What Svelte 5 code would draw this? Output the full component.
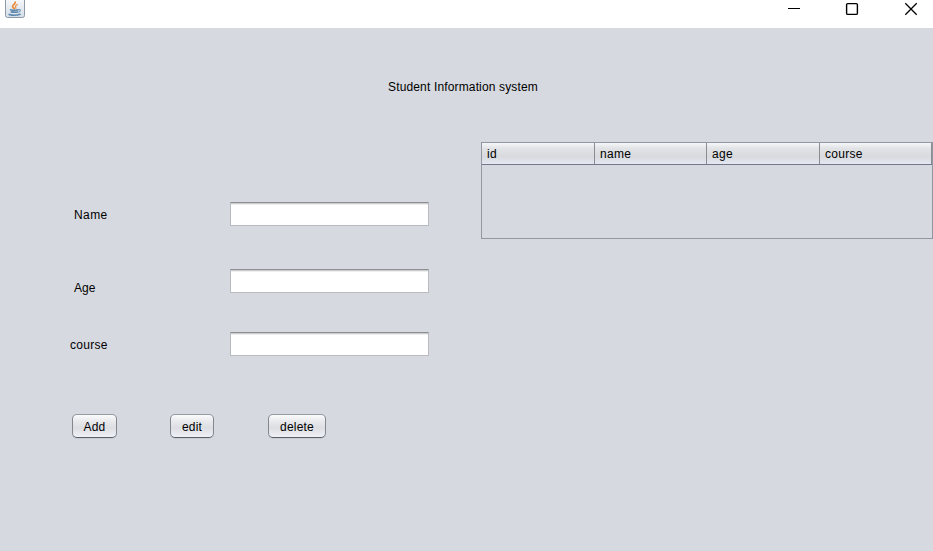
<script>
  let fields = $state([
    { label: 'Name', value: '' },
    { label: 'Age', value: '' },
    { label: 'course', value: '' },
  ]);
  const columns = ['id', 'name', 'age', 'course'];
  const actions = ['Add', 'edit', 'delete'];
</script>

<div class="window">
  <header class="titlebar">
    <svg class="java" width="20" height="18" viewBox="0 0 20 18">
      <defs>
        <linearGradient id="tile" x1="0" y1="0" x2="0" y2="1">
          <stop offset="0" stop-color="#f7f9fb" />
          <stop offset="1" stop-color="#d3dde7" />
        </linearGradient>
      </defs>
      <path d="M.5-1V15.5Q.5 17.5 2.5 17.5H17.5Q19.5 17.5 19.5 15.5V-1Z" fill="url(#tile)" stroke="#8d99a6" />
      <g fill="none" stroke-linecap="round">
        <path d="M10.2 2.2C11 4 6.8 4.8 7.7 6.8Q8.2 7.8 9.3 8.6" stroke="#e88b3c" stroke-width="1.8" />
        <path d="M12.2 4.6Q9.6 5.8 10.9 8.2" stroke="#e99b58" stroke-width="1.4" />
        <path d="M5.6 9.8Q9 10.9 13 9.8M6.3 11.9Q9.5 12.7 12.3 11.9" stroke="#5c86ad" stroke-width="1.6" />
        <path d="M13.2 9.7Q16.2 9.2 15.2 11Q14.4 12.2 12.9 12.3" stroke="#7297b8" stroke-width="1.1" />
        <path d="M4.2 14.4Q9.5 16.2 15 14.2" stroke="#5c86ad" stroke-width="1.6" />
      </g>
    </svg>
    <svg class="controls" width="130" height="18" viewBox="0 0 130 18" fill="none" stroke="#000">
      <path d="M0 8.5H12" />
      <rect x="58.6" y="3.6" width="10.8" height="10.8" rx="1.2" stroke-width="1.4" />
      <path d="M117.3 3.3L128.7 14.7M128.7 3.3L117.3 14.7" stroke-width="1.3" />
    </svg>
  </header>

  <main>
    <h1>Student Information system</h1>
    <div class="columns">
      <form onsubmit={(e) => e.preventDefault()}>
        {#each fields as field}
          <label class={field.label.toLowerCase()}>
            <span>{field.label}</span>
            <input type="text" bind:value={field.value} />
          </label>
        {/each}
        <div class="actions">
          {#each actions as action}
            <button type="button" class={action.toLowerCase()}>{action}</button>
          {/each}
        </div>
      </form>
      <section class="table">
        <div class="head">
          {#each columns as column}
            <div class="cell">{column}</div>
          {/each}
        </div>
      </section>
    </div>
  </main>
</div>

<style>
  .window {
    width: 933px;
    height: 551px;
    overflow: hidden;
    display: flex;
    flex-direction: column;
    background: #fff;
    color: #000;
    font: 12px/14px "Liberation Sans", Arial, sans-serif;
  }
  .titlebar {
    height: 28px;
    flex: none;
    display: flex;
    justify-content: space-between;
    align-items: flex-start;
    padding: 0 15px 0 5px;
    box-sizing: border-box;
  }
  svg { display: block; }
  main {
    flex: 1;
    background: #d6d9df;
  }
  h1 {
    margin: 0;
    padding: 52px 0 0 388px;
    font-size: 12px;
    font-weight: normal;
    line-height: 14px;
    letter-spacing: .15px;
  }
  .columns {
    display: flex;
    align-items: flex-start;
    padding-top: 48px;
  }
  form { width: 481px; flex: none; padding-top: 60px; }
  label {
    display: flex;
    align-items: flex-start;
    height: 24px;
    padding-left: 74px;
  }
  label span { width: 156px; flex: none; padding-top: 6px; letter-spacing: .4px; }
  .age { margin-top: 43px; }
  .age span { padding-top: 12px; letter-spacing: 0; }
  .course { margin-top: 39px; padding-left: 70px; }
  .course span { width: 160px; letter-spacing: .3px; }
  input {
    width: 199px;
    height: 24px;
    box-sizing: border-box;
    margin: 0;
    padding: 0 6px;
    border: 1px solid #b9bbbe;
    border-top-color: #8d8e91;
    border-radius: 0;
    background: linear-gradient(#cbccce 1px, #eeeeef 1px, #eeeeef 2px, #fff 2px);
    font: inherit;
    outline: none;
  }
  .actions {
    display: flex;
    padding: 58px 0 0 72px;
  }
  button {
    height: 24px;
    margin: 0;
    padding: 1px 0 0;
    box-sizing: border-box;
    border: 1px solid #84878d;
    border-top-color: #979aa0;
    border-bottom-color: #5c5f65;
    border-radius: 5px;
    background: linear-gradient(#fbfbfc 0%, #e8e9ec 30%, #dcdee2 58%, #e8eaef 85%, #f0f2f7 100%);
    box-shadow: 0 1px 0 #c8ccd3;
    font: inherit;
    color: #000;
    letter-spacing: .2px;
  }
  .add { width: 45px; }
  .edit { width: 44px; margin-left: 53px; }
  .delete { width: 58px; margin-left: 54px; }
  .table {
    width: 452px;
    height: 97px;
    box-sizing: border-box;
    border: 1px solid #9297a1;
  }
  .head {
    display: grid;
    grid-template-columns: 113px 112px 113px 112px;
    height: 22px;
    box-sizing: border-box;
    border-bottom: 1px solid #74788a;
    background: linear-gradient(#f6f7f8 0%, #e2e3e6 25%, #d8dade 65%, #e4e8f2 100%);
  }
  .cell {
    padding: 4px 0 0 5px;
    border-right: 1px solid #898c92;
    letter-spacing: .3px;
  }
</style>
